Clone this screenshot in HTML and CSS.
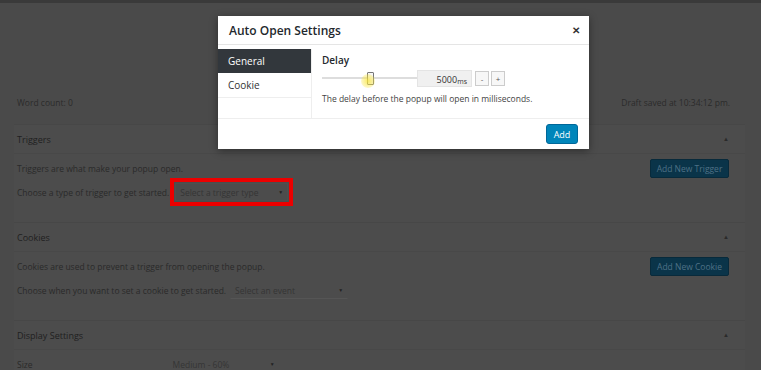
FILE: index.html
```html
<!DOCTYPE html>
<html lang="en">

<head>
    <meta charset="UTF-8">
    <meta name="viewport" content="width=device-width, initial-scale=1.0">
    <title>Auto Open Settings</title>
    <link rel="stylesheet" href="styles.css">
</head>

<body>

    <div class="screen">
        <div class="topbar"></div>

        <div class="page">
            <div class="status-row">
                <span>Word count: 0</span>
                <span>Draft saved at 10:34:12 pm.</span>
            </div>

            <div class="postbox">
                <div class="hndle">
                    <span>Triggers</span>
                    <span class="toggle">&#9650;</span>
                </div>
                <div class="inside">
                    <div class="row">
                        <span>Triggers are what make your popup open.</span>
                        <button class="btn-dark">Add New Trigger</button>
                    </div>
                    <div class="row">
                        <span>Choose a type of trigger to get started.</span>
                        <span class="highlight">
                            <span class="fake-select trigger-select">
                                <span>Select a trigger type</span>
                                <span class="caret">&#9660;</span>
                            </span>
                        </span>
                    </div>
                </div>
            </div>

            <div class="postbox">
                <div class="hndle">
                    <span>Cookies</span>
                    <span class="toggle">&#9650;</span>
                </div>
                <div class="inside">
                    <div class="row">
                        <span>Cookies are used to prevent a trigger from opening the popup.</span>
                        <button class="btn-dark">Add New Cookie</button>
                    </div>
                    <div class="row">
                        <span>Choose when you want to set a cookie to get started.</span>
                        <span class="fake-select cookie-select">
                            <span>Select an event</span>
                            <span class="caret">&#9660;</span>
                        </span>
                    </div>
                </div>
            </div>

            <div class="postbox">
                <div class="hndle">
                    <span>Display Settings</span>
                    <span class="toggle">&#9650;</span>
                </div>
                <div class="inside">
                    <div class="row">
                        <span class="field-label">Size</span>
                        <span class="fake-select size-select">
                            <span>Medium - 60%</span>
                            <span class="caret">&#9660;</span>
                        </span>
                    </div>
                </div>
            </div>
        </div>

        <!-- modal sits over the dimmed editor -->
        <div class="modal">
            <div class="modal-header">
                <span>Auto Open Settings</span>
                <span class="close">&#10005;</span>
            </div>
            <div class="modal-body">
                <ul class="tabs">
                    <li class="active">General</li>
                    <li>Cookie</li>
                </ul>
                <div class="tab-content">
                    <div class="field-title">Delay</div>
                    <div class="range-row">
                        <div class="range">
                            <div class="range-track"></div>
                            <div class="range-thumb"></div>
                        </div>
                        <div class="range-value">5000<small>ms</small></div>
                        <button class="step">-</button>
                        <button class="step">+</button>
                    </div>
                    <p class="desc">The delay before the popup will open in milliseconds.</p>
                    <div class="cursor-glow"></div>
                </div>
            </div>
            <div class="modal-footer">
                <button class="btn-primary">Add</button>
            </div>
        </div>
    </div>

</body>

</html>
```

FILE: styles.css
```css
body {
    margin: 0;
    padding: 0;
    font-family: "Open Sans", "Noto Sans", sans-serif;
    background-color: #4a4a4a;
    color: #262626;
}

.screen {
    position: relative;
    width: 761px;
    height: 370px;
    overflow: hidden;
    background-color: #4a4a4a;
}

.topbar {
    height: 3px;
    background-color: #3a3a3a;
}

.page {
    width: 731px;
    margin-left: 14px;
    padding-top: 93px;
    font-size: 8.5px;
}

.status-row {
    display: flex;
    justify-content: space-between;
    height: 14px;
    line-height: 14px;
    padding: 0 15px 0 3px;
    color: #2a2a2a;
    margin-bottom: 14px;
}

.postbox {
    border-top: 1px solid #474747;
    background-color: #4c4c4c;
    padding-bottom: 18px;
}

.hndle {
    display: flex;
    justify-content: space-between;
    align-items: center;
    height: 28px;
    padding: 0 16px 0 3px;
    font-size: 9px;
    color: #1f1f1f;
    border-bottom: 1px solid #484848;
}

.toggle {
    font-size: 6px;
    color: #2a2a2a;
}

.inside {
    padding: 2px 16px 0 3px;
}

.row {
    display: flex;
    align-items: center;
    height: 24px;
    color: #2a2a2a;
}

.btn-dark {
    margin-left: auto;
    width: 79px;
    height: 19px;
    padding: 0;
    border: 1px solid #082a3b;
    border-radius: 2px;
    background-color: #0a3449;
    color: #4e7186;
    font-family: inherit;
    font-size: 8.5px;
}

.highlight {
    display: inline-flex;
    margin-left: 1px;
    padding: 1px;
    border: 4px solid #ec0000;
}

.fake-select {
    display: inline-flex;
    align-items: center;
    justify-content: space-between;
    height: 18px;
    padding: 0 4px;
    color: #353535;
    border: 1px solid #4f4f4f;
    box-sizing: border-box;
}

.trigger-select {
    width: 113px;
}

.cookie-select {
    width: 118px;
    margin-left: 4px;
    border-color: transparent;
    border-bottom-color: #555;
}

.size-select {
    width: 112px;
    margin-left: 135px;
    border-color: transparent;
}

.caret {
    font-size: 5px;
    color: #222;
}

.modal {
    position: absolute;
    left: 218px;
    top: 16px;
    width: 371px;
    height: 133px;
    background-color: #fff;
    box-shadow: 0 2px 8px rgba(0, 0, 0, 0.4);
    display: flex;
    flex-direction: column;
}

.modal-header {
    display: flex;
    justify-content: space-between;
    align-items: center;
    height: 28px;
    padding: 0 9px 0 11px;
    font-size: 12px;
    font-weight: 600;
    color: #23282d;
    border-bottom: 1px solid #e5e5e5;
}

.close {
    font-size: 10px;
    font-weight: bold;
    color: #333;
}

.modal-body {
    display: flex;
    flex: 1;
}

.tabs {
    list-style: none;
    margin: 4px 0 0;
    padding: 0;
    width: 93px;
    border-right: 1px solid #eee;
}

.tabs li {
    height: 24px;
    line-height: 24px;
    padding-left: 10px;
    font-size: 10px;
    color: #333;
    border-bottom: 1px solid #eee;
}

.tabs li.active {
    background-color: #32373c;
    color: #fff;
    border-bottom: none;
}

.tab-content {
    position: relative;
    flex: 1;
    padding: 8px 10px 0;
}

.field-title {
    font-size: 10px;
    font-weight: 600;
    color: #23282d;
    margin-bottom: 3px;
}

.range-row {
    display: flex;
    align-items: center;
    height: 17px;
}

.range {
    position: relative;
    width: 95px;
    height: 17px;
}

.range-track {
    position: absolute;
    left: 0;
    right: 0;
    top: 7px;
    height: 2px;
    background-color: #ddd;
}

.range-thumb {
    position: absolute;
    left: 45px;
    top: 2px;
    width: 5px;
    height: 11px;
    background-color: #f7f7f7;
    border: 1px solid #777;
    border-radius: 1px;
}

.range-value {
    width: 55px;
    height: 17px;
    line-height: 17px;
    text-align: right;
    padding-right: 4px;
    box-sizing: border-box;
    background-color: #f0f0f0;
    border: 1px solid #e4e4e4;
    font-size: 9px;
    color: #333;
}

.range-value small {
    font-size: 7px;
    position: relative;
    top: 1px;
}

.step {
    width: 14px;
    height: 15px;
    margin-left: 3px;
    padding: 0;
    border: 1px solid #ccc;
    background-color: #f7f7f7;
    font-family: inherit;
    font-size: 8px;
    line-height: 13px;
    color: #555;
}

.step + .step {
    margin-left: 2px;
}

.desc {
    margin: 6px 0 0;
    font-size: 8.5px;
    color: #444;
}

.cursor-glow {
    position: absolute;
    left: 49px;
    top: 29px;
    width: 14px;
    height: 14px;
    border-radius: 50%;
    background: radial-gradient(circle, rgba(250, 230, 60, 0.8) 0%, rgba(250, 230, 60, 0.35) 60%, rgba(250, 230, 60, 0) 100%);
}

.modal-footer {
    display: flex;
    justify-content: flex-end;
    align-items: center;
    height: 30px;
    padding-right: 11px;
    border-top: 1px solid #eee;
}

.btn-primary {
    width: 32px;
    height: 20px;
    padding: 0;
    border: 1px solid #006799;
    border-radius: 3px;
    background-color: #0085ba;
    color: #fff;
    font-family: inherit;
    font-size: 9px;
}
```
